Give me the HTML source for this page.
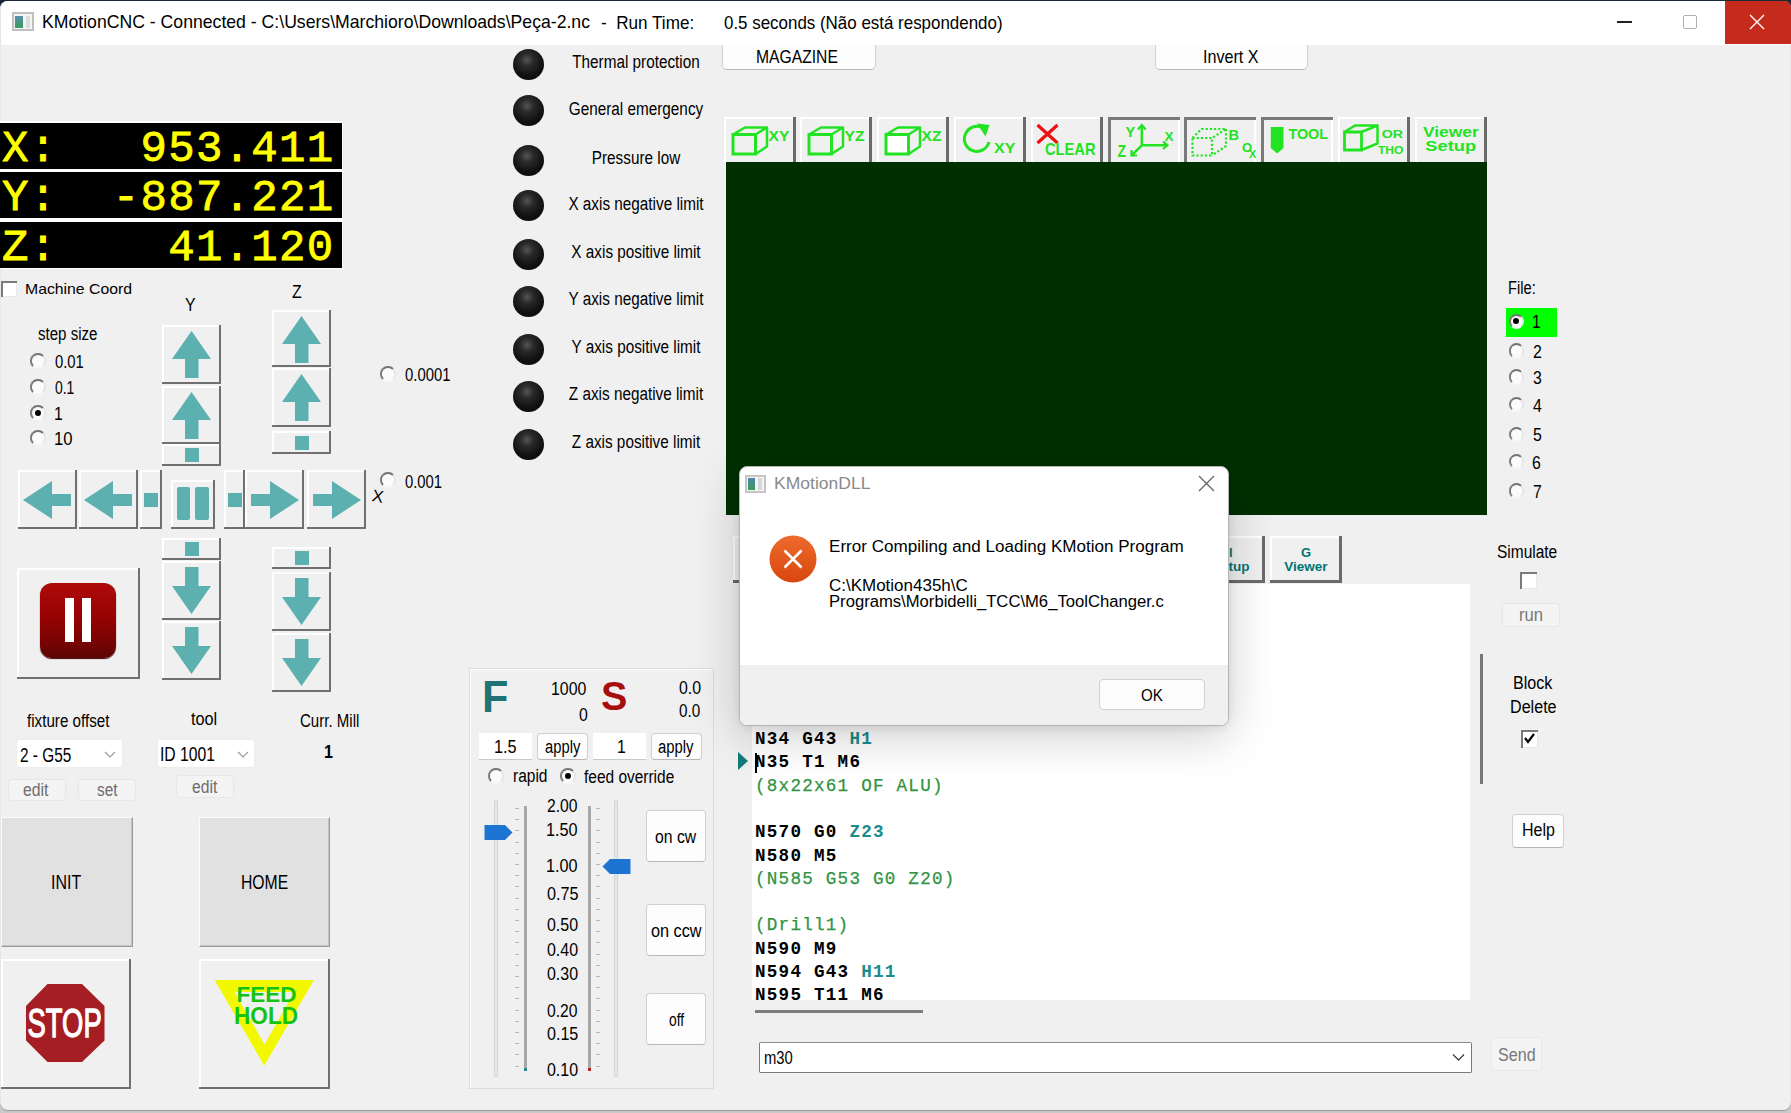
<!DOCTYPE html>
<html><head><meta charset="utf-8">
<style>
*{margin:0;padding:0;box-sizing:border-box}
html,body{width:1791px;height:1113px;overflow:hidden}
body{position:relative;background:#c9c9c9;font-family:"Liberation Sans",sans-serif;color:#000;font-size:15px}
.a{position:absolute;white-space:pre}
.win{position:absolute;left:0;top:1px;width:1791px;height:1109px;background:#f0f0f0;border-radius:8px 8px 8px 8px;box-shadow:0 1px 1px #9a9a9a;border-left:1px solid #e4e8ee;border-right:1px solid #e4e8ee}
.bot{position:absolute;left:0;top:0;width:1791px;height:12px;background:#1c2838}
.title{position:absolute;left:0;top:1px;width:1791px;height:44px;background:#fff;border-radius:8px 8px 0 0;border-left:1px solid #e2e6ee}
.dro{position:absolute;left:0;width:342px;height:46px;background:#000;color:#ff0;font-family:"Liberation Mono",monospace;font-weight:normal;-webkit-text-stroke:0.8px #ff0;font-size:44px;letter-spacing:1.3px;line-height:53px;padding-left:2px;overflow:hidden;white-space:pre}
.b3{position:absolute;background:#f0f0f0;box-shadow:inset -2px -2px 0 #707070,inset 2px 2px 0 #fff}
.tb{position:absolute;top:117px;width:72px;height:45px;background:#f0f0f0;box-shadow:inset -3px 0 0 #6a6a6a,inset 2px 2px 0 #fff}
.tbp{position:absolute;top:117px;width:72px;height:45px;background:#f0f0f0;box-shadow:inset 3px 3px 0 #7a7a7a,inset -2px 0 0 #fff}
.tbs{position:absolute;left:0;top:0;overflow:visible}
.mb{position:absolute;background:#fdfdfd;border:1px solid #d0d0d0;border-bottom-color:#b8b8b8;border-radius:4px;text-align:center}
.rad{position:absolute;width:15.5px;height:15.5px;border-radius:50%;background:#fbfbfb;border:2px solid;border-color:#747474 #e6e6e6 #f6f6f6 #7c7c7c}
.led{position:absolute;width:31px;height:31px;border-radius:50%;background:radial-gradient(circle at 45% 35%,#555 0,#2a2a2a 25%,#111 60%,#050505 100%)}
.lt{position:absolute;width:160px;text-align:center;font-size:18px;white-space:pre;transform:scaleX(0.85)}
.gc{position:absolute;left:755px;font-family:"Liberation Mono",monospace;font-weight:bold;font-size:17.6px;letter-spacing:1.24px;line-height:22px;white-space:pre;color:#000}
.cm{color:#2f9440;font-weight:normal;-webkit-text-stroke:0.25px #2f9440}
.tl{color:#1b8c8c}
.tx{position:absolute;white-space:pre;transform-origin:0 0;line-height:normal}
</style></head><body>
<div class="bot"></div><div class="win"></div>
<div class="title"></div>

<!-- title bar -->
<div class="a" style="left:12px;top:12px;width:22px;height:19px;border:2px solid #c0c0c0;background:#f4f4f4"><div class="a" style="left:1px;top:2px;width:8px;height:12px;background:linear-gradient(#5a8fb0,#3c9a5c)"></div><div class="a" style="left:12px;top:2px;width:4px;height:12px;background:#dcdcdc"></div></div>
<div class="a" style="left:1617px;top:21px;width:15px;height:2px;background:#222"></div>
<div class="a" style="left:1683px;top:15px;width:14px;height:14px;border:1px solid #b0b0b0;border-radius:2px"></div>
<div class="a" style="left:1725px;top:1px;width:66px;height:43px;background:#c42b1c;border-top-right-radius:6px"></div>
<svg class="a" style="left:1749px;top:14px" width="16" height="16"><path d="M1 1L15 15M15 1L1 15" stroke="#fff" stroke-width="1.4"/></svg>


<!-- DRO -->
<div class="a" style="left:0;top:121px;width:343px;height:148px;background:#fff"></div>
<div class="dro" style="top:123px">X:   953.411</div>
<div class="dro" style="top:172px;height:46px">Y:  -887.221</div>
<div class="dro" style="top:222px">Z:    41.120</div>
<!-- machine coord -->
<div class="a" style="left:1px;top:281px;width:16px;height:16px;background:#fff;box-shadow:inset 2px 2px 0 #7a7a7a,inset -1px -1px 0 #e8e8e8"></div>




<div class="rad" style="left:30px;top:353px"></div>
<div class="rad" style="left:30px;top:379px"></div>
<div class="rad" style="left:30px;top:405px"><div class="a" style="left:2.75px;top:2.75px;width:6px;height:6px;border-radius:50%;background:#000"></div></div>
<div class="rad" style="left:30px;top:430px"></div>
<div class="rad" style="left:380px;top:366px"></div>
<div class="rad" style="left:380px;top:472px"></div>
<!-- jog -->
<div class="b3" style="left:162px;top:325px;width:59px;height:59px"><svg class="a" style="left:0;top:0" width="59" height="59"><path d="M29.5 6L49 34H36.5V53H23V34H10Z" fill="#5cb0b0"/></svg></div>
<div class="b3" style="left:162px;top:386px;width:59px;height:58px"><svg class="a" style="left:0;top:0" width="59" height="58"><path d="M29.5 6L49 34H36.5V53H23V34H10Z" fill="#5cb0b0"/></svg></div>
<div class="b3" style="left:162px;top:444px;width:59px;height:22px"><div class="a" style="left:22.5px;top:3.5px;width:14px;height:14px;background:#5cb0b0"></div></div>
<div class="b3" style="left:162px;top:538px;width:59px;height:22px"><div class="a" style="left:22.5px;top:3.5px;width:14px;height:14px;background:#5cb0b0"></div></div>
<div class="b3" style="left:162px;top:561px;width:59px;height:59px"><svg class="a" style="left:0;top:0" width="59" height="59"><path d="M29.5 53L49 25H36.5V6H23V25H10Z" fill="#5cb0b0"/></svg></div>
<div class="b3" style="left:162px;top:621px;width:59px;height:59px"><svg class="a" style="left:0;top:0" width="59" height="59"><path d="M29.5 53L49 25H36.5V6H23V25H10Z" fill="#5cb0b0"/></svg></div>
<div class="b3" style="left:272px;top:310px;width:59px;height:57px"><svg class="a" style="left:0;top:0" width="59" height="57"><path d="M29.5 6L49 34H36.5V53H23V34H10Z" fill="#5cb0b0"/></svg></div>
<div class="b3" style="left:272px;top:368px;width:59px;height:59px"><svg class="a" style="left:0;top:0" width="59" height="59"><path d="M29.5 6L49 34H36.5V53H23V34H10Z" fill="#5cb0b0"/></svg></div>
<div class="b3" style="left:272px;top:431px;width:59px;height:23px"><div class="a" style="left:22.5px;top:4.5px;width:14px;height:14px;background:#5cb0b0"></div></div>
<div class="b3" style="left:272px;top:547px;width:59px;height:22px"><div class="a" style="left:22.5px;top:3.5px;width:14px;height:14px;background:#5cb0b0"></div></div>
<div class="b3" style="left:272px;top:572px;width:59px;height:59px"><svg class="a" style="left:0;top:0" width="59" height="59"><path d="M29.5 53L49 25H36.5V6H23V25H10Z" fill="#5cb0b0"/></svg></div>
<div class="b3" style="left:272px;top:633px;width:59px;height:59px"><svg class="a" style="left:0;top:0" width="59" height="59"><path d="M29.5 53L49 25H36.5V6H23V25H10Z" fill="#5cb0b0"/></svg></div>
<div class="b3" style="left:18px;top:470px;width:59px;height:59px"><svg class="a" style="left:0;top:0" width="59" height="59"><path d="M5 30L34 11V24H53V36H34V49Z" fill="#5cb0b0"/></svg></div>
<div class="b3" style="left:79px;top:470px;width:59px;height:59px"><svg class="a" style="left:0;top:0" width="59" height="59"><path d="M5 30L34 11V24H53V36H34V49Z" fill="#5cb0b0"/></svg></div>
<div class="b3" style="left:140px;top:470px;width:22px;height:59px"><div class="a" style="left:3.5px;top:22.5px;width:14px;height:14px;background:#5cb0b0"></div></div>
<div class="b3" style="left:171px;top:480px;width:44px;height:49px"><div class="a" style="left:5.5px;top:7px;width:13px;height:33px;background:#5cb0b0;border-radius:2px"></div><div class="a" style="left:24.2px;top:7px;width:13.8px;height:33px;background:#5cb0b0;border-radius:2px"></div></div>
<div class="b3" style="left:224px;top:470px;width:21px;height:59px"><div class="a" style="left:3.5px;top:22.5px;width:14px;height:14px;background:#5cb0b0"></div></div>
<div class="b3" style="left:245px;top:470px;width:59px;height:59px"><svg class="a" style="left:0;top:0" width="59" height="59"><path d="M54 30L25 11V24H6V36H25V49Z" fill="#5cb0b0"/></svg></div>
<div class="b3" style="left:307px;top:470px;width:59px;height:59px"><svg class="a" style="left:0;top:0" width="59" height="59"><path d="M54 30L25 11V24H6V36H25V49Z" fill="#5cb0b0"/></svg></div>
<div class="a" style="left:372px;top:487px;font-size:17px;transform:rotate(10deg)">X</div>
<div class="b3" style="left:17px;top:568px;width:123px;height:111px"><div class="a" style="left:23px;top:15px;width:76px;height:75px;border-radius:12px;background:linear-gradient(#ae0a0a,#980202 45%,#720404 85%,#5a0303);box-shadow:0 1px 1px #400"><div class="a" style="left:25px;top:15px;width:9px;height:44px;background:#fff"></div><div class="a" style="left:42px;top:15px;width:9px;height:44px;background:#fff"></div></div></div>
<!-- fixture / tool -->



<div class="a" style="left:16px;top:739px;width:107px;height:29px;background:#fff;border:1px solid #ececec;border-radius:3px"></div>

<svg class="a" style="left:104px;top:751px" width="12" height="8"><path d="M1 1L6 6L11 1" stroke="#9a9a9a" fill="none" stroke-width="1.2"/></svg>
<div class="a" style="left:157px;top:739px;width:98px;height:29px;background:#fff;border:1px solid #ececec;border-radius:3px"></div>

<svg class="a" style="left:237px;top:751px" width="12" height="8"><path d="M1 1L6 6L11 1" stroke="#9a9a9a" fill="none" stroke-width="1.2"/></svg>

<div class="mb" style="left:8px;top:779px;width:58px;height:22px;border-color:#e6e6e6;background:#f4f4f4;color:#6d6d6d;font-size:15px;line-height:20px"></div>
<div class="mb" style="left:78px;top:779px;width:58px;height:22px;border-color:#e6e6e6;background:#f4f4f4;color:#6d6d6d;font-size:15px;line-height:20px"></div>
<div class="mb" style="left:176px;top:775px;width:58px;height:23px;border-color:#e6e6e6;background:#f4f4f4;color:#6d6d6d;font-size:15px;line-height:21px"></div>
<!-- INIT HOME -->
<div class="a" style="left:1px;top:817px;width:132px;height:130px;background:#e1e1e1;border:1px solid;border-color:#fbfbfb #9a9a9a #9a9a9a #fbfbfb;box-shadow:inset -1px -1px 0 #c4c4c4;font-size:16px;text-align:center;line-height:128px;letter-spacing:0.5px"></div>
<div class="a" style="left:199px;top:817px;width:131px;height:130px;background:#e1e1e1;border:1px solid;border-color:#fbfbfb #9a9a9a #9a9a9a #fbfbfb;box-shadow:inset -1px -1px 0 #c4c4c4;font-size:16px;text-align:center;line-height:128px;letter-spacing:0.5px"></div>
<div class="b3" style="left:1px;top:959px;width:130px;height:130px"></div>
<svg class="a" style="left:0;top:955px" width="135" height="135"><path d="M47.5 29H82L104.5 51V85.5L82 107H47.5L26 85.5V51Z" fill="#a51e23"/><text x="0" y="82.5" font-family="Liberation Sans" font-size="40" fill="#fff" stroke="#fff" stroke-width="1.3" transform="translate(27.6,0) scale(0.685,1)">STOP</text></svg>
<div class="b3" style="left:199px;top:959px;width:131px;height:130px"></div>
<svg class="a" style="left:200px;top:960px" width="130" height="130"><path d="M14.6 20H113.9L64.2 105.7Z" fill="#f2f800"/><path d="M34.5 32H94.5L64.5 84.4Z" fill="#f0f0f0"/><text x="0" y="41.8" font-family="Liberation Sans" font-weight="bold" font-size="22" fill="#14c314" transform="translate(36.5,0) scale(1.02,1)">FEED</text><text x="0" y="63.6" font-family="Liberation Sans" font-weight="bold" font-size="23" fill="#14c314" transform="translate(34,0) scale(0.985,1)">HOLD</text></svg>
<!-- indicators -->
<div class="led" style="left:513px;top:48.9px"></div><div class="lt" style="left:556px;top:52.1px">Thermal protection</div>
<div class="led" style="left:513px;top:95.4px"></div><div class="lt" style="left:556px;top:98.6px">General emergency</div>
<div class="led" style="left:513px;top:144.7px"></div><div class="lt" style="left:556px;top:147.9px">Pressure low</div>
<div class="led" style="left:513px;top:190.4px"></div><div class="lt" style="left:556px;top:193.6px">X axis negative limit</div>
<div class="led" style="left:513px;top:238.9px"></div><div class="lt" style="left:556px;top:242.1px">X axis positive limit</div>
<div class="led" style="left:513px;top:285.5px"></div><div class="lt" style="left:556px;top:288.7px">Y axis negative limit</div>
<div class="led" style="left:513px;top:333.9px"></div><div class="lt" style="left:556px;top:337.1px">Y axis positive limit</div>
<div class="led" style="left:513px;top:380.5px"></div><div class="lt" style="left:556px;top:383.7px">Z axis negative limit</div>
<div class="led" style="left:513px;top:429.0px"></div><div class="lt" style="left:556px;top:432.2px">Z axis positive limit</div>
<!-- top buttons -->
<div class="mb" style="left:722px;top:45px;width:154px;height:25px;border-top:none;border-radius:0 0 5px 5px;font-size:16px;line-height:22px"></div>
<div class="mb" style="left:1155px;top:45px;width:153px;height:25px;border-top:none;border-radius:0 0 5px 5px;font-size:16px;line-height:22px"></div>
<!-- toolbar -->
<div class="tb" style="left:723.5px"><svg class="tbs" width="72" height="45"><path d="M9 17.5H31.5V37H9Z" fill="none" stroke="#22e322" stroke-width="3"/><path d="M9 17.5L21 10.5H43L31.5 17.5M43 10.5V29.5L31.5 37" fill="none" stroke="#22e322" stroke-width="2.5" stroke-linejoin="round"/><text x="42.88" y="24.4" font-family="Liberation Sans" font-weight="bold" font-size="15" fill="#22e322" transform="scale(1.04,1)">XY</text></svg></div>
<div class="tb" style="left:800.3px"><svg class="tbs" width="72" height="45"><path d="M9 17.5H31.5V37H9Z" fill="none" stroke="#22e322" stroke-width="3"/><path d="M9 17.5L21 10.5H43L31.5 17.5M43 10.5V29.5L31.5 37" fill="none" stroke="#22e322" stroke-width="2.5" stroke-linejoin="round"/><text x="42.88" y="24.4" font-family="Liberation Sans" font-weight="bold" font-size="15" fill="#22e322" transform="scale(1.04,1)">YZ</text></svg></div>
<div class="tb" style="left:877.1px"><svg class="tbs" width="72" height="45"><path d="M9 17.5H31.5V37H9Z" fill="#fff" stroke="#22e322" stroke-width="3"/><path d="M9 17.5L21 10.5H43L31.5 17.5M43 10.5V29.5L31.5 37" fill="none" stroke="#22e322" stroke-width="2.5" stroke-linejoin="round"/><text x="42.88" y="24.4" font-family="Liberation Sans" font-weight="bold" font-size="15" fill="#22e322" transform="scale(1.04,1)">XZ</text></svg></div>
<div class="tb" style="left:953.9px"><svg class="tbs" width="72" height="45"><path d="M29 11A12.5 12.5 0 1 0 35 25" fill="none" stroke="#22e322" stroke-width="3"/><path d="M23 6.5L35.5 8L31.5 19.5Z" fill="#22e322"/><text x="37.38" y="35.6" font-family="Liberation Sans" font-weight="bold" font-size="15" fill="#22e322" transform="scale(1.07,1)">XY</text></svg></div>
<div class="tb" style="left:1030.7px"><svg class="tbs" width="72" height="45"><path d="M6.5 8L26.5 26M26.5 8L6.5 26" stroke="#ee1111" stroke-width="3.2"/><text x="15.73" y="37.6" font-family="Liberation Sans" font-weight="bold" font-size="16.5" fill="#22e322" transform="scale(0.89,1)">CLEAR</text></svg></div>
<div class="tbp" style="left:1107.5px"><svg class="tbs" width="72" height="45"><path d="M33.8 9V28.3H59M33.8 28.3L23.5 38.5" fill="none" stroke="#22e322" stroke-width="2.5"/><path d="M30 12.5L33.8 8L37.6 12.5M55 24.5L59.5 28.3L55 32M23.5 33V38.5H29" fill="none" stroke="#22e322" stroke-width="2.2"/><text x="17.50" y="19.8" font-family="Liberation Sans" font-weight="bold" font-size="14.5" fill="#22e322" transform="scale(1.0,1)">Y</text><text x="56.50" y="24.3" font-family="Liberation Sans" font-weight="bold" font-size="13.5" fill="#22e322" transform="scale(1.0,1)">X</text><text x="11.18" y="40" font-family="Liberation Sans" font-weight="bold" font-size="16.5" fill="#22e322" transform="scale(0.85,1)">Z</text></svg></div>
<div class="tbp" style="left:1184.3px"><svg class="tbs" width="72" height="45"><path d="M8.5 21H28V38.5H8.5Z M8.5 21L17.5 12H42L28 21 M42 12V29L28 38.5" fill="none" stroke="#22e322" stroke-width="2.2" stroke-dasharray="2.2 2"/><text x="44.50" y="23" font-family="Liberation Sans" font-weight="bold" font-size="14.5" fill="#22e322" transform="scale(1.0,1)">B</text><text x="58.00" y="35" font-family="Liberation Sans" font-weight="bold" font-size="13" fill="#22e322" transform="scale(1.0,1)">O</text><text x="65.00" y="40.5" font-family="Liberation Sans" font-weight="bold" font-size="11" fill="#22e322" transform="scale(1.0,1)">X</text></svg></div>
<div class="tbp" style="left:1261.1px"><svg class="tbs" width="72" height="45"><path d="M9.8 10H22.5V31L16.15 36.5L9.8 31Z" fill="#22e322"/><text x="28.54" y="22.2" font-family="Liberation Sans" font-weight="bold" font-size="15" fill="#22e322" transform="scale(0.96,1)">TOOL</text></svg></div>
<div class="tb" style="left:1337.9px"><svg class="tbs" width="72" height="45"><path d="M6.5 15H23.5V33H6.5Z" fill="none" stroke="#22e322" stroke-width="2.8"/><path d="M6.5 15L17 8.5H39.5L23.5 15M39.5 8.5V26.5L23.5 33" fill="none" stroke="#22e322" stroke-width="2.5" stroke-linejoin="round"/><text x="35.32" y="21.2" font-family="Liberation Sans" font-weight="bold" font-size="11.5" fill="#22e322" transform="scale(1.24,1)">OR</text><text x="38.10" y="36.6" font-family="Liberation Sans" font-weight="bold" font-size="11.5" fill="#22e322" transform="scale(1.05,1)">THO</text></svg></div>
<div class="tb" style="left:1414.7px"><svg class="tbs" width="72" height="45"><text x="6.90" y="19.8" font-family="Liberation Sans" font-weight="bold" font-size="15" fill="#22e322" transform="scale(1.16,1)">Viewer</text><text x="8.44" y="34.4" font-family="Liberation Sans" font-weight="bold" font-size="15" fill="#22e322" transform="scale(1.22,1)">Setup</text></svg></div>
<!-- viewer -->
<div class="a" style="left:726px;top:162px;width:761px;height:353px;background:#003000"></div>
<!-- tab row behind dialog -->
<div class="a" style="left:733px;top:536px;width:72px;height:47px;background:#f0f0f0;box-shadow:inset -3px -3px 0 #6a6a6a,inset 2px 2px 0 #fff"></div>
<div class="a" style="left:1193px;top:536px;width:72px;height:47px;background:#f0f0f0;box-shadow:inset -3px -3px 0 #6a6a6a,inset 2px 2px 0 #fff"><svg class="tbs" width="72" height="47"><text x="36" y="21" font-family="Liberation Sans" font-weight="bold" font-size="13" fill="#007474">l</text><text x="19" y="35" font-family="Liberation Sans" font-weight="bold" font-size="13.5" fill="#007474">Setup</text></svg></div>
<div class="a" style="left:1270px;top:536px;width:72px;height:47px;background:#f0f0f0;box-shadow:inset -3px -3px 0 #6a6a6a,inset 2px 2px 0 #fff"><svg class="tbs" width="72" height="47"><text x="36" y="21" text-anchor="middle" font-family="Liberation Sans" font-weight="bold" font-size="13" fill="#007474">G</text><text x="36" y="35" text-anchor="middle" font-family="Liberation Sans" font-weight="bold" font-size="13.5" fill="#007474">Viewer</text></svg></div>
<!-- gcode area -->
<div class="a" style="left:752px;top:584px;width:718px;height:416px;background:#fff"></div>
<div class="gc" style="top:728.0px">N34 G43 <span class="tl">H1</span></div>
<div class="gc" style="top:751.3px">N35 T1 M6</div>
<div class="a" style="left:755px;top:753px;width:1.5px;height:20px;background:#000"></div>
<svg class="a" style="left:737px;top:751px" width="12" height="20"><path d="M1 1L11 10L1 19Z" fill="#137a7a"/></svg>
<div class="gc cm" style="top:774.6px">(8x22x61 OF ALU)</div>
<div class="gc" style="top:821.2px">N570 G0 <span class="tl">Z23</span></div>
<div class="gc" style="top:844.5px">N580 M5</div>
<div class="gc cm" style="top:867.8px">(N585 G53 G0 Z20)</div>
<div class="gc cm" style="top:914.4px">(Drill1)</div>
<div class="gc" style="top:937.7px">N590 M9</div>
<div class="gc" style="top:961.0px">N594 G43 <span class="tl">H11</span></div>
<div class="gc" style="top:984.3px;height:15.7px;overflow:hidden">N595 T11 M6</div>
<div class="a" style="left:755px;top:1010px;width:168px;height:3px;background:#7d7d7d"></div>
<!-- command input -->
<div class="a" style="left:759px;top:1042px;width:713px;height:31px;background:#fff;border:1px solid #7a7a7a;border-top-color:#8a8a8a;border-radius:2px"></div>

<svg class="a" style="left:1452px;top:1053px" width="13" height="9"><path d="M1 1.5L6.5 7L12 1.5" stroke="#444" fill="none" stroke-width="1.3"/></svg>
<div class="mb" style="left:1491px;top:1037px;width:51px;height:34px;background:#f4f4f4;border-color:#e8e8e8;color:#777;font-size:16px;line-height:31px"></div>
<!-- feed panel -->
<div class="a" style="left:469px;top:668px;width:245px;height:421px;border:1px solid #dcdcdc;box-shadow:inset 1px 1px 0 #fff"></div>


<div class="a" style="left:479px;top:733px;width:53px;height:27px;background:#fff;border-bottom:1px solid #c8c8c8;font-size:16px;text-align:center;line-height:26px"></div>
<div class="mb" style="left:537px;top:733px;width:51px;height:27px;font-size:16px;line-height:25px"></div>
<div class="a" style="left:593px;top:733px;width:53px;height:27px;background:#fff;border-bottom:1px solid #c8c8c8;font-size:16px;text-align:center;line-height:26px"></div>
<div class="mb" style="left:651px;top:733px;width:51px;height:27px;font-size:16px;line-height:25px"></div>
<div class="rad" style="left:488px;top:768px"></div>
<div class="rad" style="left:560px;top:768px"><div class="a" style="left:2.75px;top:2.75px;width:6px;height:6px;border-radius:50%;background:#000"></div></div>
<!-- sliders -->
<div class="a" style="left:494px;top:800px;width:4px;height:277px;background:#e6e6e6;border:1px solid #d6d6d6"></div>
<div class="a" style="left:614px;top:800px;width:4px;height:277px;background:#e6e6e6;border:1px solid #d6d6d6"></div>
<div class="a" style="left:523.5px;top:806px;width:3px;height:264px;background:#a8a8a8"></div>
<div class="a" style="left:588px;top:806px;width:3px;height:264px;background:#a8a8a8"></div>
<div class="a" style="left:523.5px;top:1068px;width:3px;height:3px;background:#2a8a8a"></div>
<div class="a" style="left:588px;top:1068px;width:3px;height:3px;background:#c02020"></div>
<svg class="a" style="left:484px;top:824px" width="30" height="18"><path d="M0.5 1H21L28.5 8.5L21 16H0.5Z" fill="#1e74d2"/></svg>
<svg class="a" style="left:601px;top:858px" width="30" height="18"><path d="M29.5 1H9L1.5 8.5L9 16H29.5Z" fill="#1e74d2"/></svg>
<div class="a" style="left:515px;top:808.0px;width:4px;height:1px;background:#b8b8b8"></div><div class="a" style="left:596px;top:808.0px;width:4px;height:1px;background:#b8b8b8"></div><div class="a" style="left:515px;top:819.2px;width:4px;height:1px;background:#b8b8b8"></div><div class="a" style="left:596px;top:819.2px;width:4px;height:1px;background:#b8b8b8"></div><div class="a" style="left:515px;top:830.4px;width:4px;height:1px;background:#b8b8b8"></div><div class="a" style="left:596px;top:830.4px;width:4px;height:1px;background:#b8b8b8"></div><div class="a" style="left:515px;top:841.6px;width:4px;height:1px;background:#b8b8b8"></div><div class="a" style="left:596px;top:841.6px;width:4px;height:1px;background:#b8b8b8"></div><div class="a" style="left:515px;top:852.8px;width:4px;height:1px;background:#b8b8b8"></div><div class="a" style="left:596px;top:852.8px;width:4px;height:1px;background:#b8b8b8"></div><div class="a" style="left:515px;top:864.0px;width:4px;height:1px;background:#b8b8b8"></div><div class="a" style="left:596px;top:864.0px;width:4px;height:1px;background:#b8b8b8"></div><div class="a" style="left:515px;top:875.2px;width:4px;height:1px;background:#b8b8b8"></div><div class="a" style="left:596px;top:875.2px;width:4px;height:1px;background:#b8b8b8"></div><div class="a" style="left:515px;top:886.4px;width:4px;height:1px;background:#b8b8b8"></div><div class="a" style="left:596px;top:886.4px;width:4px;height:1px;background:#b8b8b8"></div><div class="a" style="left:515px;top:897.6px;width:4px;height:1px;background:#b8b8b8"></div><div class="a" style="left:596px;top:897.6px;width:4px;height:1px;background:#b8b8b8"></div><div class="a" style="left:515px;top:908.8px;width:4px;height:1px;background:#b8b8b8"></div><div class="a" style="left:596px;top:908.8px;width:4px;height:1px;background:#b8b8b8"></div><div class="a" style="left:515px;top:920.0px;width:4px;height:1px;background:#b8b8b8"></div><div class="a" style="left:596px;top:920.0px;width:4px;height:1px;background:#b8b8b8"></div><div class="a" style="left:515px;top:931.2px;width:4px;height:1px;background:#b8b8b8"></div><div class="a" style="left:596px;top:931.2px;width:4px;height:1px;background:#b8b8b8"></div><div class="a" style="left:515px;top:942.4px;width:4px;height:1px;background:#b8b8b8"></div><div class="a" style="left:596px;top:942.4px;width:4px;height:1px;background:#b8b8b8"></div><div class="a" style="left:515px;top:953.6px;width:4px;height:1px;background:#b8b8b8"></div><div class="a" style="left:596px;top:953.6px;width:4px;height:1px;background:#b8b8b8"></div><div class="a" style="left:515px;top:964.8px;width:4px;height:1px;background:#b8b8b8"></div><div class="a" style="left:596px;top:964.8px;width:4px;height:1px;background:#b8b8b8"></div><div class="a" style="left:515px;top:976.0px;width:4px;height:1px;background:#b8b8b8"></div><div class="a" style="left:596px;top:976.0px;width:4px;height:1px;background:#b8b8b8"></div><div class="a" style="left:515px;top:987.2px;width:4px;height:1px;background:#b8b8b8"></div><div class="a" style="left:596px;top:987.2px;width:4px;height:1px;background:#b8b8b8"></div><div class="a" style="left:515px;top:998.4px;width:4px;height:1px;background:#b8b8b8"></div><div class="a" style="left:596px;top:998.4px;width:4px;height:1px;background:#b8b8b8"></div><div class="a" style="left:515px;top:1009.6px;width:4px;height:1px;background:#b8b8b8"></div><div class="a" style="left:596px;top:1009.6px;width:4px;height:1px;background:#b8b8b8"></div><div class="a" style="left:515px;top:1020.8px;width:4px;height:1px;background:#b8b8b8"></div><div class="a" style="left:596px;top:1020.8px;width:4px;height:1px;background:#b8b8b8"></div><div class="a" style="left:515px;top:1032.0px;width:4px;height:1px;background:#b8b8b8"></div><div class="a" style="left:596px;top:1032.0px;width:4px;height:1px;background:#b8b8b8"></div><div class="a" style="left:515px;top:1043.2px;width:4px;height:1px;background:#b8b8b8"></div><div class="a" style="left:596px;top:1043.2px;width:4px;height:1px;background:#b8b8b8"></div><div class="a" style="left:515px;top:1054.4px;width:4px;height:1px;background:#b8b8b8"></div><div class="a" style="left:596px;top:1054.4px;width:4px;height:1px;background:#b8b8b8"></div><div class="a" style="left:515px;top:1065.6px;width:4px;height:1px;background:#b8b8b8"></div><div class="a" style="left:596px;top:1065.6px;width:4px;height:1px;background:#b8b8b8"></div>
<div class="mb" style="left:646px;top:810px;width:60px;height:52px;font-size:16px;line-height:50px"></div>
<div class="mb" style="left:646px;top:904px;width:60px;height:52px;font-size:16px;line-height:50px"></div>
<div class="mb" style="left:646px;top:993px;width:60px;height:52px;font-size:16px;line-height:50px"></div>
<!-- right panel -->

<div class="a" style="left:1506px;top:308px;width:51px;height:29px;background:#00ff00"></div>
<div class="rad" style="left:1508.5px;top:313.5px"><div class="a" style="left:2.75px;top:2.75px;width:6px;height:6px;border-radius:50%;background:#000"></div></div>
<div class="rad" style="left:1508.5px;top:343.1px"></div>
<div class="rad" style="left:1508.5px;top:369.3px"></div>
<div class="rad" style="left:1508.5px;top:396.8px"></div>
<div class="rad" style="left:1508.5px;top:426.5px"></div>
<div class="rad" style="left:1508.5px;top:453.8px"></div>
<div class="rad" style="left:1508.5px;top:483.2px"></div>

<div class="a" style="left:1520px;top:572px;width:17px;height:17px;background:#fff;box-shadow:inset 2px 2px 0 #7a7a7a,inset -1px -1px 0 #e8e8e8"></div>
<div class="mb" style="left:1502px;top:603px;width:58px;height:24px;background:#f4f4f4;border-color:#e6e6e6;color:#777;font-size:15px;line-height:22px"></div>
<div class="a" style="left:1480px;top:654px;width:3px;height:130px;background:#777"></div>


<div class="a" style="left:1521px;top:730px;width:17px;height:18px;background:#fff;box-shadow:inset 2px 2px 0 #7a7a7a,inset -1px -1px 0 #e8e8e8"><svg class="a" style="left:2px;top:2px" width="13" height="13"><path d="M2 6L5 10L11 2" stroke="#000" stroke-width="2.2" fill="none"/></svg></div>
<div class="mb" style="left:1512px;top:814px;width:52px;height:34px;font-size:16px;line-height:32px"></div>
<!-- dialog -->
<div class="a" style="left:739px;top:466px;width:490px;height:260px;border-radius:8px;background:#fff;border:1px solid #b4b4b4;box-shadow:0 10px 48px rgba(0,0,0,0.2),0 2px 8px rgba(0,0,0,0.08);overflow:hidden">
<div class="a" style="left:0;top:198px;width:490px;height:62px;background:#f0f0f0"></div>
</div>
<div class="a" style="left:745px;top:475px;width:21px;height:18px;border:2px solid #c4c4c4;background:#f4f4f4"><div class="a" style="left:1px;top:1px;width:7px;height:12px;background:linear-gradient(#4e86a8,#3a9a5a)"></div><div class="a" style="left:11px;top:1px;width:4px;height:12px;background:#d8d8d8"></div></div>

<svg class="a" style="left:1198px;top:475px" width="17" height="17"><path d="M1 1L16 16M16 1L1 16" stroke="#666" stroke-width="1.3"/></svg>
<svg class="a" style="left:769px;top:535px" width="48" height="48"><defs><linearGradient id="eg" x1="0" y1="0" x2="0" y2="1"><stop offset="0" stop-color="#ee6a2c"/><stop offset="1" stop-color="#d9470e"/></linearGradient></defs><circle cx="24" cy="24" r="23.5" fill="url(#eg)"/><path d="M15.5 15.5L32.5 32.5M32.5 15.5L15.5 32.5" stroke="#fff" stroke-width="2.6"/></svg>


<div class="mb" style="left:1099px;top:679px;width:106px;height:31px;background:#fdfdfd;border-color:#d0d0d0;font-size:16.6px;line-height:29px"></div>
<!-- TEXTS -->
<div class="tx" style="left:42.0px;top:12.4px;font-size:17.80px;transform:scaleX(0.992)">KMotionCNC - Connected - C:\Users\Marchioro\Downloads\Peça-2.nc</div>
<div class="tx" style="left:601.0px;top:13.1px;font-size:17.80px;transform:scaleX(0.962)">-  Run Time:</div>
<div class="tx" style="left:724.4px;top:12.7px;font-size:17.80px;transform:scaleX(0.952)">0.5 seconds (Não está respondendo)</div>
<div class="tx" style="left:25.2px;top:281.4px;font-size:14.78px;transform:scaleX(1.068)">Machine Coord</div>
<div class="tx" style="left:185.0px;top:295.1px;font-size:18.00px;transform:scaleX(0.880)">Y</div>
<div class="tx" style="left:292.1px;top:281.8px;font-size:18.00px;transform:scaleX(0.880)">Z</div>
<div class="tx" style="left:37.5px;top:323.5px;font-size:18.00px;transform:scaleX(0.837)">step size</div>
<div class="tx" style="left:55.0px;top:352.0px;font-size:18.00px;transform:scaleX(0.823)">0.01</div>
<div class="tx" style="left:55.0px;top:377.5px;font-size:18.00px;transform:scaleX(0.774)">0.1</div>
<div class="tx" style="left:54.0px;top:404.2px;font-size:18.00px;transform:scaleX(0.880)">1</div>
<div class="tx" style="left:54.0px;top:429.4px;font-size:18.00px;transform:scaleX(0.925)">10</div>
<div class="tx" style="left:405.3px;top:365.3px;font-size:18.00px;transform:scaleX(0.825)">0.0001</div>
<div class="tx" style="left:405.3px;top:471.9px;font-size:18.00px;transform:scaleX(0.822)">0.001</div>
<div class="tx" style="left:27.2px;top:710.6px;font-size:18.00px;transform:scaleX(0.843)">fixture offset</div>
<div class="tx" style="left:190.7px;top:709.2px;font-size:18.00px;transform:scaleX(0.902)">tool</div>
<div class="tx" style="left:299.8px;top:710.6px;font-size:18.00px;transform:scaleX(0.836)">Curr. Mill</div>
<div class="tx" style="left:19.7px;top:742.9px;font-size:20.57px;transform:scaleX(0.747)">2 - G55</div>
<div class="tx" style="left:160.3px;top:743.1px;font-size:20.37px;transform:scaleX(0.772)">ID 1001</div>
<div class="tx" style="left:324.2px;top:741.3px;font-size:18.26px;transform:scaleX(0.880);font-weight:bold">1</div>
<div class="tx" style="left:22.9px;top:779.5px;font-size:18.00px;transform:scaleX(0.876);color:#6d6d6d">edit</div>
<div class="tx" style="left:97.1px;top:780.4px;font-size:18.00px;transform:scaleX(0.851);color:#6d6d6d">set</div>
<div class="tx" style="left:191.6px;top:777.2px;font-size:18.00px;transform:scaleX(0.870);color:#6d6d6d">edit</div>
<div class="tx" style="left:50.6px;top:870.6px;font-size:20.27px;transform:scaleX(0.790)">INIT</div>
<div class="tx" style="left:240.7px;top:870.6px;font-size:20.27px;transform:scaleX(0.777)">HOME</div>
<div class="tx" style="left:756.4px;top:46.7px;font-size:17.90px;transform:scaleX(0.876)">MAGAZINE</div>
<div class="tx" style="left:1203.0px;top:46.5px;font-size:17.90px;transform:scaleX(0.901)">Invert X</div>
<div class="tx" style="left:481.5px;top:671.9px;font-size:43.75px;transform:scaleX(0.988);font-weight:bold;color:#1f7373">F</div>
<div class="tx" style="left:600.9px;top:672.4px;font-size:41.57px;transform:scaleX(0.950);font-weight:bold;color:#a70f0f">S</div>
<div class="tx" style="left:550.9px;top:679.1px;font-size:18.00px;transform:scaleX(0.882)">1000</div>
<div class="tx" style="left:578.7px;top:705.3px;font-size:18.00px;transform:scaleX(0.880)">0</div>
<div class="tx" style="left:679.2px;top:677.6px;font-size:18.00px;transform:scaleX(0.882)">0.0</div>
<div class="tx" style="left:679.2px;top:701.3px;font-size:18.00px;transform:scaleX(0.849)">0.0</div>
<div class="tx" style="left:494.3px;top:736.7px;font-size:18.00px;transform:scaleX(0.904)">1.5</div>
<div class="tx" style="left:545.2px;top:736.6px;font-size:18.00px;transform:scaleX(0.820)">apply</div>
<div class="tx" style="left:616.5px;top:736.7px;font-size:18.00px;transform:scaleX(0.880)">1</div>
<div class="tx" style="left:658.3px;top:736.6px;font-size:18.00px;transform:scaleX(0.825)">apply</div>
<div class="tx" style="left:512.6px;top:765.7px;font-size:18.00px;transform:scaleX(0.861)">rapid</div>
<div class="tx" style="left:584.1px;top:767.2px;font-size:18.00px;transform:scaleX(0.859)">feed override</div>
<div class="tx" style="left:655.4px;top:826.9px;font-size:18.00px;transform:scaleX(0.875)">on cw</div>
<div class="tx" style="left:651.0px;top:920.6px;font-size:18.00px;transform:scaleX(0.903)">on ccw</div>
<div class="tx" style="left:669.2px;top:1010.1px;font-size:18.00px;transform:scaleX(0.767)">off</div>
<div class="tx" style="left:1507.6px;top:278.0px;font-size:18.00px;transform:scaleX(0.815)">File:</div>
<div class="tx" style="left:1496.5px;top:541.7px;font-size:18.00px;transform:scaleX(0.860)">Simulate</div>
<div class="tx" style="left:1518.7px;top:605.2px;font-size:18.00px;transform:scaleX(0.924);color:#777">run</div>
<div class="tx" style="left:1513.1px;top:672.6px;font-size:18.00px;transform:scaleX(0.895)">Block</div>
<div class="tx" style="left:1509.8px;top:697.1px;font-size:18.00px;transform:scaleX(0.895)">Delete</div>
<div class="tx" style="left:1522.1px;top:819.6px;font-size:18.00px;transform:scaleX(0.889)">Help</div>
<div class="tx" style="left:1497.6px;top:1045.0px;font-size:18.00px;transform:scaleX(0.894);color:#777">Send</div>
<div class="tx" style="left:764.0px;top:1048.0px;font-size:17.75px;transform:scaleX(0.834)">m30</div>
<div class="tx" style="left:773.6px;top:473.0px;font-size:17.20px;transform:scaleX(1.019);color:#8a8a8a">KMotionDLL</div>
<div class="tx" style="left:829.0px;top:538.4px;font-size:15.60px;transform:scaleX(1.094)">Error Compiling and Loading KMotion Program</div>
<div class="tx" style="left:828.9px;top:577.0px;font-size:15.60px;transform:scaleX(1.089)">C:\KMotion435h\C</div>
<div class="tx" style="left:829.1px;top:593.3px;font-size:15.60px;transform:scaleX(1.067)">Programs\Morbidelli_TCC\M6_ToolChanger.c</div>
<div class="tx" style="left:1141.4px;top:686.9px;font-size:15.60px;transform:scaleX(0.972)">OK</div>
<div class="tx" style="left:547.2px;top:796.2px;font-size:18.00px;transform:scaleX(0.871)">2.00</div>
<div class="tx" style="left:546.1px;top:819.9px;font-size:18.00px;transform:scaleX(0.901)">1.50</div>
<div class="tx" style="left:546.1px;top:856.3px;font-size:18.00px;transform:scaleX(0.901)">1.00</div>
<div class="tx" style="left:547.2px;top:883.5px;font-size:18.00px;transform:scaleX(0.900)">0.75</div>
<div class="tx" style="left:547.2px;top:915.3px;font-size:18.00px;transform:scaleX(0.886)">0.50</div>
<div class="tx" style="left:547.2px;top:940.1px;font-size:18.00px;transform:scaleX(0.886)">0.40</div>
<div class="tx" style="left:547.2px;top:964.2px;font-size:18.00px;transform:scaleX(0.886)">0.30</div>
<div class="tx" style="left:547.2px;top:1000.9px;font-size:18.00px;transform:scaleX(0.871)">0.20</div>
<div class="tx" style="left:547.2px;top:1024.2px;font-size:18.00px;transform:scaleX(0.894)">0.15</div>
<div class="tx" style="left:547.2px;top:1059.9px;font-size:18.00px;transform:scaleX(0.886)">0.10</div>
<div class="tx" style="left:1531.7px;top:312.2px;font-size:18.00px;transform:scaleX(0.880)">1</div>
<div class="tx" style="left:1532.8px;top:342.0px;font-size:18.00px;transform:scaleX(0.880)">2</div>
<div class="tx" style="left:1532.8px;top:367.8px;font-size:18.00px;transform:scaleX(0.880)">3</div>
<div class="tx" style="left:1532.8px;top:396.0px;font-size:18.00px;transform:scaleX(0.880)">4</div>
<div class="tx" style="left:1532.8px;top:424.5px;font-size:18.00px;transform:scaleX(0.880)">5</div>
<div class="tx" style="left:1531.8px;top:452.5px;font-size:18.00px;transform:scaleX(0.880)">6</div>
<div class="tx" style="left:1532.8px;top:481.7px;font-size:18.00px;transform:scaleX(0.880)">7</div>
<!-- /TEXTS -->
</body></html>
